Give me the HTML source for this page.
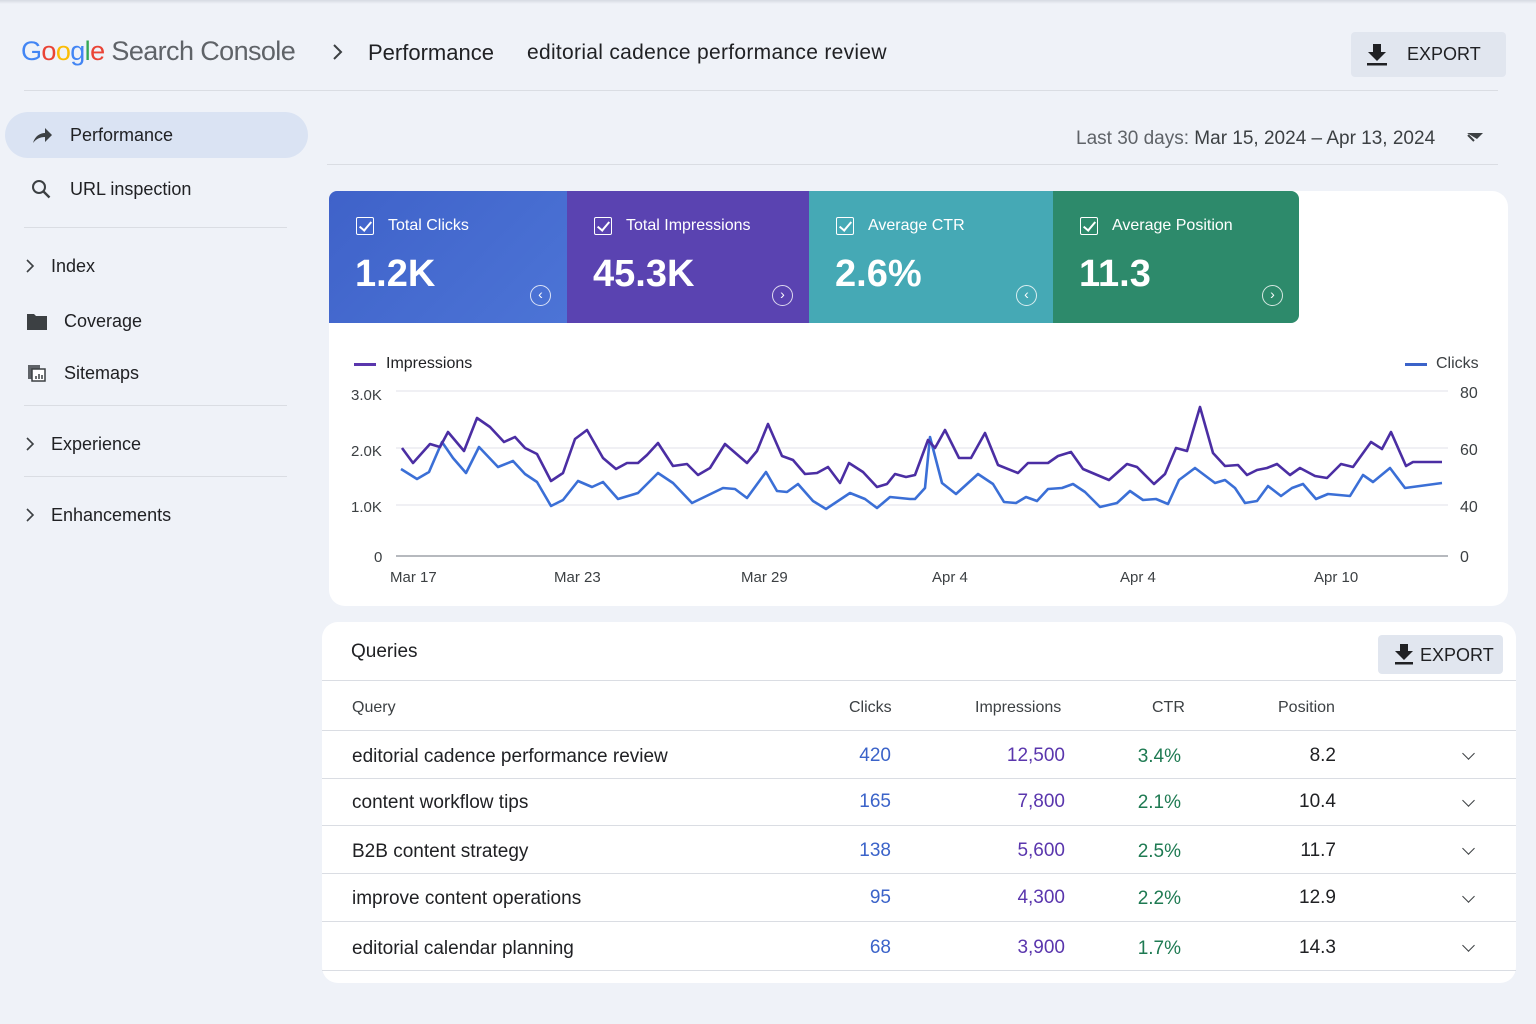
<!DOCTYPE html>
<html><head><meta charset="utf-8"><style>
*{margin:0;padding:0;box-sizing:border-box}
body{width:1536px;height:1024px;background:#eff2f8;font-family:"Liberation Sans",sans-serif;position:relative;overflow:hidden;color:#202124}
.a{position:absolute;white-space:nowrap}
.hl{position:absolute;height:1px;background:#dadde3}
.nav{font-size:18px;color:#202124}
.tile{position:absolute;top:191px;height:132px;color:#fff}
.tile .lb{position:absolute;left:27px;top:26px;font-size:16px;display:flex;align-items:center;gap:14px}
.cb{width:18px;height:18px;border:1.5px solid #fff;border-radius:2px;position:relative}
.cb:after{content:"";position:absolute;left:5px;top:1px;width:5px;height:10px;border:solid #fff;border-width:0 2px 2px 0;transform:rotate(40deg)}
.tile .v{position:absolute;left:26px;top:62px;font-size:38px;font-weight:bold}
.tile .c{position:absolute;right:16px;top:94px;width:21px;height:21px;border:1.5px solid rgba(255,255,255,.8);border-radius:50%;font-size:14px;text-align:center;line-height:17px}
.th{font-size:16px;color:#3c4043;top:699px}
.r{font-size:19px}
.q{left:352px;color:#202124}
.cl{color:#3b63c9;right:645px}
.im{color:#5a36ad;right:471px}
.ct{color:#1e7a52;right:355px}
.po{color:#202124;right:200px}
.chev{right:63px;width:9px;height:9px;border:solid #3c4043;border-width:0 1.6px 1.6px 0;transform:rotate(45deg)}
.sc{position:absolute;left:25px}
</style></head><body>
<div style="position:absolute;left:0;top:0;width:1536px;height:4px;background:linear-gradient(#d6dae2,#eff2f8)"></div>
<div class="a" style="left:21px;top:36px;font-size:27px;letter-spacing:-0.6px"><span style="color:#4285f4">G</span><span style="color:#ea4335">o</span><span style="color:#fbbc05">o</span><span style="color:#4285f4">g</span><span style="color:#34a853">l</span><span style="color:#ea4335">e</span> <span style="color:#5f6368">Search Console</span></div>
<svg class="a" style="left:332px;top:43px" width="12" height="18"><path d="M2 2l7 7-7 7" fill="none" stroke="#3c4043" stroke-width="2"/></svg>
<div class="a" style="left:368px;top:40px;font-size:22px;color:#202124">Performance</div>
<div class="a" style="left:527px;top:41px;font-size:21px;color:#202124;letter-spacing:0.3px">editorial cadence performance review</div>
<div style="position:absolute;left:1351px;top:32px;width:155px;height:45px;background:#e1e6ef;border-radius:4px"></div>
<svg class="a" style="left:1366px;top:42px" width="22" height="24"><path d="M7 2h8v8h5l-9 9-9-9h5z" fill="#202124"/><rect x="1" y="21" width="20" height="2.5" fill="#202124"/></svg>
<div class="a" style="left:1407px;top:44px;font-size:18px;color:#202124">EXPORT</div>
<div class="hl" style="left:24px;top:90px;width:1474px"></div>

<div style="position:absolute;left:5px;top:112px;width:303px;height:46px;background:#dae3f3;border-radius:23px"></div>
<svg class="a" style="left:31px;top:125px" width="22" height="20"><path d="M2 18c2-7 7-10 12-10V3l7 7-7 7v-5c-5 0-9 2-12 6z" fill="#3c4043"/></svg>
<div class="a nav" style="left:70px;top:125px">Performance</div>
<svg class="a" style="left:31px;top:179px" width="22" height="22"><circle cx="8" cy="8" r="6" fill="none" stroke="#3c4043" stroke-width="2"/><path d="M12.5 12.5l6 6" stroke="#3c4043" stroke-width="2.4"/></svg>
<div class="a nav" style="left:70px;top:179px">URL inspection</div>
<div class="hl" style="left:24px;top:227px;width:263px"></div>
<svg class="sc" style="top:259px" width="10" height="14"><path d="M2 1l6 6-6 6" fill="none" stroke="#3c4043" stroke-width="1.6"/></svg>
<div class="a nav" style="left:51px;top:256px">Index</div>
<svg class="a" style="left:27px;top:312px" width="21" height="18"><path d="M0 2h7l2 2h11v14H0z" fill="#3c4043"/></svg>
<div class="a nav" style="left:64px;top:311px">Coverage</div>
<svg class="a" style="left:28px;top:365px" width="18" height="17"><rect x="0" y="0" width="12" height="14" fill="#5f6368"/><rect x="4" y="4" width="13" height="12" fill="#fff" stroke="#3c4043" stroke-width="1.5"/><path d="M8 14v-3M11 14v-5M14 14v-4" stroke="#3c4043" stroke-width="1.5"/></svg>
<div class="a nav" style="left:64px;top:363px">Sitemaps</div>
<div class="hl" style="left:24px;top:405px;width:263px"></div>
<svg class="sc" style="top:437px" width="10" height="14"><path d="M2 1l6 6-6 6" fill="none" stroke="#3c4043" stroke-width="1.6"/></svg>
<div class="a nav" style="left:51px;top:434px">Experience</div>
<div class="hl" style="left:24px;top:476px;width:263px"></div>
<svg class="sc" style="top:508px" width="10" height="14"><path d="M2 1l6 6-6 6" fill="none" stroke="#3c4043" stroke-width="1.6"/></svg>
<div class="a nav" style="left:51px;top:505px">Enhancements</div>

<div class="a" style="left:1076px;top:128px;font-size:19px;color:#5f6368">Last 30 days: <span style="color:#3c4043">Mar 15, 2024 – Apr 13, 2024</span></div>
<svg class="a" style="left:1466px;top:130px" width="18" height="14"><path d="M1 3h16l-6 6z" fill="#3c4043"/><path d="M2 5l6 6" stroke="#3c4043" stroke-width="2"/></svg>
<div class="hl" style="left:327px;top:164px;width:1171px"></div>

<div style="position:absolute;left:329px;top:191px;width:1179px;height:415px;background:#fff;border-radius:16px"></div>
<div class="tile" style="left:329px;width:238px;background:linear-gradient(135deg,#3f62c9,#4c74d6);border-radius:8px 0 0 0"><div class="lb"><div class="cb"></div>Total Clicks</div><div class="v">1.2K</div><div class="c">&#8249;</div></div>
<div class="tile" style="left:567px;width:242px;background:#5a43b1"><div class="lb"><div class="cb"></div>Total Impressions</div><div class="v">45.3K</div><div class="c">&#8250;</div></div>
<div class="tile" style="left:809px;width:244px;background:#45a9b5"><div class="lb"><div class="cb"></div>Average CTR</div><div class="v">2.6%</div><div class="c">&#8249;</div></div>
<div class="tile" style="left:1053px;width:246px;background:#2d8a6b;border-radius:0 8px 8px 0"><div class="lb"><div class="cb"></div>Average Position</div><div class="v">11.3</div><div class="c">&#8250;</div></div>

<div style="position:absolute;left:354px;top:363px;width:22px;height:3px;background:#5a36ad"></div>
<div class="a" style="left:386px;top:355px;font-size:16px;color:#202124">Impressions</div>
<div style="position:absolute;left:1405px;top:363px;width:22px;height:3px;background:#3b63c9"></div>
<div class="a" style="left:1436px;top:355px;font-size:16px;color:#3c4043">Clicks</div>
<div class="a" style="left:351px;top:387px;font-size:15px;color:#3c4043">3.0K</div>
<div class="a" style="left:351px;top:443px;font-size:15px;color:#3c4043">2.0K</div>
<div class="a" style="left:351px;top:499px;font-size:15px;color:#3c4043">1.0K</div>
<div class="a" style="left:374px;top:549px;font-size:15px;color:#3c4043">0</div>
<div class="a" style="left:1460px;top:385px;font-size:16px;color:#3c4043">80</div>
<div class="a" style="left:1460px;top:442px;font-size:16px;color:#3c4043">60</div>
<div class="a" style="left:1460px;top:499px;font-size:16px;color:#3c4043">40</div>
<div class="a" style="left:1460px;top:549px;font-size:16px;color:#3c4043">0</div>
<svg class="a" style="left:0;top:0" width="1536" height="600">
<path d="M396 391H1448M396 448H1448M396 505H1448" stroke="#e6e8ee" stroke-width="1.2"/>
<path d="M396 556H1448" stroke="#8a8f98" stroke-width="1.3"/>
<polyline fill="none" stroke="#3b6fd6" stroke-width="2.6" stroke-linejoin="round" points="401,469 417,479 429,472 442,442 453,458 466,473 479,447 498,467 513,461 525,474 537,482 551,506 563,500 578,481 592,487 603,482 618,499 638,493 658,473 673,483 692,503 723,488 735,489 747,498 766,472 777,491 787,492 798,484 813,501 826,509 850,493 865,499 877,508 890,497 910,499 915,499 925,488 930,437 942,483 956,494 978,474 993,484 1004,502 1016,503 1026,497 1037,501 1048,489 1062,488 1073,484 1085,492 1100,507 1117,503 1130,491 1143,500 1156,499 1168,504 1179,480 1195,468 1215,483 1225,480 1235,488 1245,503 1257,501 1268,486 1281,496 1292,488 1303,484 1316,499 1328,494 1350,496 1363,475 1373,482 1390,468 1405,488 1442,483"/>
<polyline fill="none" stroke="#4b2ea3" stroke-width="2.6" stroke-linejoin="round" points="402,448 413,463 430,444 440,447 448,432 464,451 477,418 490,427 504,442 515,437 525,448 537,454 551,481 563,473 575,439 587,430 603,458 616,469 627,463 638,463 647,455 658,443 673,466 687,464 698,475 710,468 725,444 747,463 757,451 768,424 782,456 793,460 805,474 817,473 828,467 840,483 849,463 863,472 877,487 887,484 895,474 906,477 915,475 928,440 935,448 945,430 959,458 971,458 985,433 998,465 1018,473 1028,463 1048,463 1058,456 1071,452 1083,469 1109,480 1127,464 1137,467 1154,484 1165,474 1176,448 1187,451 1200,407 1213,453 1225,466 1238,465 1247,475 1257,470 1267,468 1277,464 1290,475 1300,468 1315,476 1327,478 1341,464 1353,467 1371,442 1382,449 1391,432 1406,466 1413,462 1442,462"/>
</svg>
<div class="a" style="left:390px;top:569px;font-size:15px;color:#3c4043">Mar 17</div>
<div class="a" style="left:554px;top:569px;font-size:15px;color:#3c4043">Mar 23</div>
<div class="a" style="left:741px;top:569px;font-size:15px;color:#3c4043">Mar 29</div>
<div class="a" style="left:932px;top:569px;font-size:15px;color:#3c4043">Apr 4</div>
<div class="a" style="left:1120px;top:569px;font-size:15px;color:#3c4043">Apr 4</div>
<div class="a" style="left:1314px;top:569px;font-size:15px;color:#3c4043">Apr 10</div>

<div style="position:absolute;left:322px;top:622px;width:1194px;height:361px;background:#fff;border-radius:16px"></div>
<div class="a" style="left:351px;top:641px;font-size:19px;color:#202124">Queries</div>
<div style="position:absolute;left:1378px;top:635px;width:125px;height:39px;background:#e1e6ef;border-radius:4px"></div>
<svg class="a" style="left:1394px;top:643px" width="20" height="22"><path d="M6 1h8v7h5l-9 9-9-9h5z" fill="#202124"/><rect x="1" y="19" width="18" height="2.5" fill="#202124"/></svg>
<div class="a" style="left:1420px;top:645px;font-size:18px;color:#202124">EXPORT</div>
<div class="hl" style="left:322px;top:680px;width:1194px"></div>
<div class="a th" style="left:352px">Query</div>
<div class="a th" style="left:849px">Clicks</div>
<div class="a th" style="left:975px">Impressions</div>
<div class="a th" style="left:1152px">CTR</div>
<div class="a th" style="left:1278px">Position</div>
<div class="hl" style="left:322px;top:730px;width:1194px"></div>

<div class="a r q" style="top:746px">editorial cadence performance review</div><div class="a r cl" style="top:745px">420</div><div class="a r im" style="top:745px">12,500</div><div class="a r ct" style="top:746px">3.4%</div><div class="a r po" style="top:745px">8.2</div><div class="a chev" style="top:749px"></div>
<div class="hl" style="left:322px;top:778px;width:1194px"></div>
<div class="a r q" style="top:792px">content workflow tips</div><div class="a r cl" style="top:791px">165</div><div class="a r im" style="top:791px">7,800</div><div class="a r ct" style="top:792px">2.1%</div><div class="a r po" style="top:791px">10.4</div><div class="a chev" style="top:796px"></div>
<div class="hl" style="left:322px;top:825px;width:1194px"></div>
<div class="a r q" style="top:841px">B2B content strategy</div><div class="a r cl" style="top:840px">138</div><div class="a r im" style="top:840px">5,600</div><div class="a r ct" style="top:841px">2.5%</div><div class="a r po" style="top:840px">11.7</div><div class="a chev" style="top:844px"></div>
<div class="hl" style="left:322px;top:873px;width:1194px"></div>
<div class="a r q" style="top:888px">improve content operations</div><div class="a r cl" style="top:887px">95</div><div class="a r im" style="top:887px">4,300</div><div class="a r ct" style="top:888px">2.2%</div><div class="a r po" style="top:887px">12.9</div><div class="a chev" style="top:892px"></div>
<div class="hl" style="left:322px;top:921px;width:1194px"></div>
<div class="a r q" style="top:938px">editorial calendar planning</div><div class="a r cl" style="top:937px">68</div><div class="a r im" style="top:937px">3,900</div><div class="a r ct" style="top:938px">1.7%</div><div class="a r po" style="top:937px">14.3</div><div class="a chev" style="top:941px"></div>
<div class="hl" style="left:322px;top:970px;width:1194px"></div>
</body></html>
